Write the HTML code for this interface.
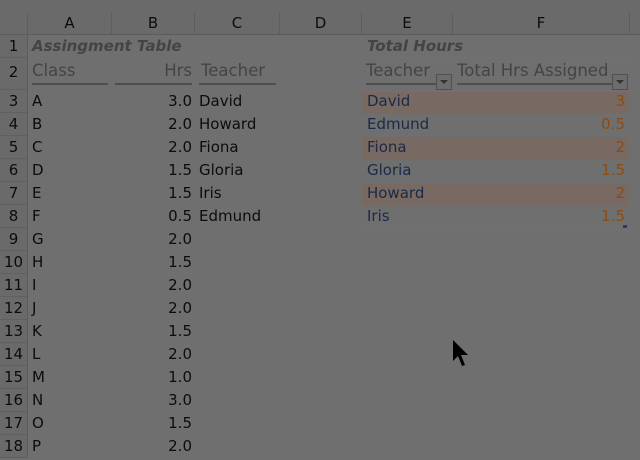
<!DOCTYPE html><html><head><style>
body{margin:0;width:640px;height:460px;background:#6f6f6f;overflow:hidden;position:relative;font-family:"DejaVu Sans","Liberation Sans",sans-serif;font-size:15px;color:#0c0c0c}
.a{position:absolute;white-space:nowrap;line-height:22px;z-index:2}
.hd{position:absolute;top:12px;height:22px;background:#6a6a6a;border-right:1px solid #5e5e5e;border-bottom:1px solid #5c5c5c;text-align:center;line-height:22px;font-size:15px}
.rn{position:absolute;left:0;width:27px;background:#6a6a6a;border-right:1px solid #5c5c5c;border-bottom:1px solid #606060;text-align:center;font-size:15px}
.g{color:#444}
.h{font-size:16.5px}
.ul{position:absolute;height:2px;background:#4e4e4e}
.band{position:absolute;left:362px;width:267px;height:23px;background:#786a62;z-index:1}
.n{color:#1a2a46}.o{color:#8a4c14}
.dd{position:absolute;width:14px;height:14px;border:1px solid #505050;background:#6c6c6c;z-index:3}
.dd:after{content:"";position:absolute;left:3px;top:5px;border:4px solid transparent;border-top:4px solid #333;border-bottom:0}
</style></head><body>
<div style="position:absolute;left:0;top:0;width:640px;height:12px;background:#6a6a6a"></div>
<div class="hd" style="left:0;width:27px"></div>
<div class="hd" style="left:28px;width:83px">A</div>
<div class="hd" style="left:112px;width:82px">B</div>
<div class="hd" style="left:195px;width:84px">C</div>
<div class="hd" style="left:280px;width:81px">D</div>
<div class="hd" style="left:362px;width:90px">E</div>
<div class="hd" style="left:453px;width:176px">F</div>
<div class="hd" style="left:630px;width:20px"></div>

<div class="rn" style="top:35px;height:22px;line-height:22px">1</div>
<div class="rn" style="top:58px;height:31px;line-height:28px">2</div>

<div class="band" style="top:91px"></div>
<div class="band" style="top:137px"></div>
<div class="band" style="top:183px"></div>
<div id="rows"></div>

<div class="a g" style="left:32px;top:35px;font-style:italic;font-weight:bold">Assingment Table</div>
<div class="a g h" style="left:32px;top:60px">Class</div>
<div class="a g h" style="left:192px;top:60px;transform:translateX(-100%)">Hrs</div>
<div class="a g h" style="left:201px;top:60px">Teacher</div>
<div class="ul" style="left:32px;top:83px;width:76px"></div>
<div class="ul" style="left:115px;top:83px;width:77px"></div>
<div class="ul" style="left:199px;top:83px;width:77px"></div>

<div class="a g" style="left:367px;top:35px;font-style:italic;font-weight:bold">Total Hours</div>
<div style="position:absolute;left:362px;top:57px;width:267px;height:1px;background:#8a6a50"></div>
<div class="a g h" style="left:366px;top:60px">Teacher</div>
<div class="a g h" style="left:457px;top:60px">Total Hrs Assigned</div>
<div class="ul" style="left:366px;top:83px;width:70px"></div>
<div class="ul" style="left:457px;top:83px;width:155px"></div>
<div class="dd" style="left:436px;top:74px"></div>
<div class="dd" style="left:612px;top:74px"></div>
<div style="position:absolute;left:362px;top:91px;width:267px;height:1px;background:#8a6a50;z-index:2"></div>
<div style="position:absolute;left:362px;top:229px;width:267px;height:1px;background:#8a6a50"></div>
<div style="position:absolute;left:623px;top:225px;width:4px;height:3px;background:#2a3a66"></div>

<script>
var L="ABCDEFGHIJKLMNOP".split(""),H=["3.0","2.0","2.0","1.5","1.5","0.5","2.0","1.5","2.0","2.0","1.5","2.0","1.0","3.0","1.5","2.0"],T=["David","Howard","Fiona","Gloria","Iris","Edmund"],P=[["David","3"],["Edmund","0.5"],["Fiona","2"],["Gloria","1.5"],["Howard","2"],["Iris","1.5"]],s="";
for(var i=0;i<16;i++){var y=90+i*23;
s+='<div class="rn" style="top:'+y+'px;height:22px;line-height:22px">'+(i+3)+'</div>';
s+='<div class="a" style="left:32px;top:'+y+'px">'+L[i]+'</div>';
s+='<div class="a" style="left:112px;width:80px;text-align:right;top:'+y+'px">'+H[i]+'</div>';
if(T[i])s+='<div class="a" style="left:199px;top:'+y+'px">'+T[i]+'</div>';
if(P[i]){s+='<div class="a n" style="left:367px;top:'+y+'px">'+P[i][0]+'</div><div class="a o" style="left:460px;width:165px;text-align:right;top:'+y+'px">'+P[i][1]+'</div>';}}
document.getElementById("rows").innerHTML=s;
</script>
<svg style="position:absolute;left:452px;top:339px;z-index:5" width="20" height="30" viewBox="0 0 20 30"><path d="M1 1 L1 22 L6 17 L10 27 L13 26 L9 16 L16 16 Z" fill="#000"/></svg>
</body></html>
